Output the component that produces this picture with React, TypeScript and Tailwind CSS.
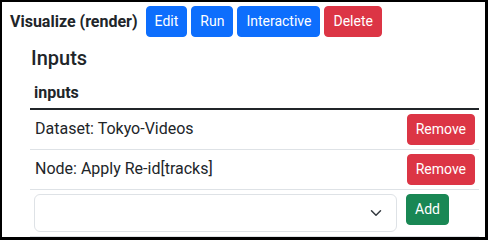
import React from "react";

const btn =
  "inline-flex items-center rounded-[4px] border px-[8px] py-[4px] text-[14px] leading-[21px] text-white";

export default function App() {
  const inputs = ["Dataset: Tokyo-Videos", "Node: Apply Re-id[tracks]"];

  return (
    <div
      className="h-[240px] w-[488px] border-t-2 border-l-2 border-r-[3px] border-b-[3px] border-black bg-white text-[16px] leading-6 text-[#212529]"
      style={{ fontFamily: "Roboto, 'Liberation Sans', sans-serif" }}
    >
      <div className="pt-[4px] pl-[8px]">
        {/* Header */}
        <div className="flex items-center">
          <span className="mr-[8px] font-bold">Visualize (render)</span>
          <div className="flex gap-[4px]">
            <button className={`${btn} border-[#0d6efd] bg-[#0d6efd]`}>Edit</button>
            <button className={`${btn} border-[#0d6efd] bg-[#0d6efd]`}>Run</button>
            <button className={`${btn} border-[#0d6efd] bg-[#0d6efd]`}>Interactive</button>
            <button className={`${btn} border-[#dc3545] bg-[#dc3545]`}>Delete</button>
          </div>
        </div>

        {/* Inputs */}
        <div className="mt-[9px] ml-[20px] w-[449px]">
          <h5 className="mb-[6px] pl-[1px] text-[20px] font-medium leading-[24px]">Inputs</h5>
          <div className="border-b-2 border-[#212529] px-[4px] pt-[5px] pb-[3px] font-bold">inputs</div>

          {inputs.map((name) => (
            <div key={name} className="flex items-start justify-between border-b border-[#dee2e6] p-[4px]">
              <span className="pt-[3px] pl-[1px]">{name}</span>
              <button className={`${btn} border-[#dc3545] bg-[#dc3545]`}>Remove</button>
            </div>
          ))}

          <div className="flex items-start border-b border-[#dee2e6] p-[4px]">
            <div className="flex h-[38px] w-[363px] items-center justify-end rounded-[6px] border border-[#dee2e6] pr-[12px]">
              <svg width="16" height="12" viewBox="0 0 16 16" fill="none">
                <path d="m2 5 6 6 6-6" stroke="#343a40" strokeWidth="2" strokeLinecap="round" strokeLinejoin="round" />
              </svg>
            </div>
            <button className={`${btn} ml-[9px] border-[#198754] bg-[#198754]`}>Add</button>
          </div>
        </div>
      </div>
    </div>
  );
}
